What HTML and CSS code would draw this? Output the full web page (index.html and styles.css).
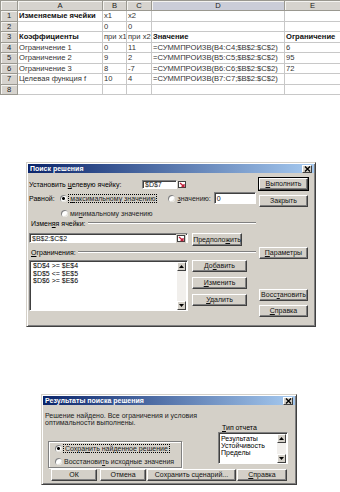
FILE: index.html
```html
<!DOCTYPE html>
<html lang="ru">

<head>
    <meta charset="UTF-8">
    <meta name="viewport" content="width=device-width, initial-scale=1.0">
    <title>Поиск решения</title>
    <link rel="stylesheet" href="styles.css">
</head>

<body>
    <!-- лист с исходными данными -->
    <table class="sheet">
        <colgroup>
            <col class="c-row">
            <col class="c-a">
            <col class="c-b">
            <col class="c-c">
            <col class="c-d">
            <col class="c-e">
        </colgroup>
        <tr class="head">
            <th></th><th>A</th><th>B</th><th>C</th><th class="sel">D</th><th>E</th>
        </tr>
        <tr>
            <th>1</th><td class="b">Изменяемые ячейки</td><td>x1</td><td>x2</td><td></td><td></td>
        </tr>
        <tr>
            <th>2</th><td></td><td>0</td><td>0</td><td></td><td></td>
        </tr>
        <tr>
            <th>3</th><td class="b">Коэффициенты</td><td>при x1</td><td>при x2</td><td class="b">Значение</td><td class="b">Ограничение</td>
        </tr>
        <tr>
            <th>4</th><td>Ограничение 1</td><td>0</td><td>11</td><td>=СУММПРОИЗВ(B4:C4;$B$2:$C$2)</td><td>6</td>
        </tr>
        <tr>
            <th>5</th><td>Ограничение 2</td><td>9</td><td>2</td><td>=СУММПРОИЗВ(B5:C5;$B$2:$C$2)</td><td>95</td>
        </tr>
        <tr>
            <th>6</th><td>Ограничение 3</td><td>8</td><td>-7</td><td>=СУММПРОИЗВ(B6:C6;$B$2:$C$2)</td><td>72</td>
        </tr>
        <tr>
            <th>7</th><td>Целевая функция f</td><td>10</td><td>4</td><td>=СУММПРОИЗВ(B7:C7;$B$2:$C$2)</td><td></td>
        </tr>
        <tr>
            <th>8</th><td></td><td></td><td></td><td></td><td></td>
        </tr>
    </table>

    <!-- окно "Поиск решения" -->
    <div class="dlg solver">
        <div class="caption">
            <span>Поиск решения</span>
            <span class="close-btn">
                <svg width="7" height="6" viewBox="0 0 7 6"><path d="M1 0.5L6 5.5M6 0.5L1 5.5" stroke="#000" stroke-width="1.4"/></svg>
            </span>
        </div>
        <div class="solver-body">
            <div class="solver-main">
                <div class="line target">
                    <span class="lbl target-lbl">Установить <u>ц</u>елевую ячейку:</span>
                    <span class="edit target-edit">$D$7</span>
                    <span class="ref">
                        <svg width="10" height="9" viewBox="0 0 10 9"><rect x="1.5" y="1.5" width="7" height="6" fill="#fff" stroke="#404040"/><path d="M3 3L7 6.5M7 4v2.5H4.5" fill="none" stroke="#c0203a" stroke-width="1.3"/></svg>
                    </span>
                </div>
                <div class="line equal">
                    <span class="lbl eq-lbl">Равной:</span>
                    <span class="radio on"></span>
                    <span class="rtext focus"><u>м</u>аксимальному значению</span>
                    <span class="radio val-radio"></span>
                    <span class="rtext"><u>з</u>начению:</span>
                    <span class="edit value-edit">0</span>
                </div>
                <div class="line minline">
                    <span class="radio"></span>
                    <span class="rtext">ми<u>н</u>имальному значению</span>
                </div>
                <div class="grp-title"><span>Измен<u>я</u>я ячейки:</span></div>
                <div class="line cells">
                    <span class="edit cells-edit">
                        <span class="edit-text">$B$2:$C$2</span>
                        <span class="ref">
                            <svg width="10" height="9" viewBox="0 0 10 9"><rect x="1.5" y="1.5" width="7" height="6" fill="#fff" stroke="#404040"/><path d="M3 3L7 6.5M7 4v2.5H4.5" fill="none" stroke="#c0203a" stroke-width="1.3"/></svg>
                        </span>
                    </span>
                    <span class="btn guess">Предполо<u>ж</u>ить</span>
                </div>
                <div class="grp-title"><span><u>О</u>граничения:</span></div>
                <div class="line limits">
                    <div class="list limits-list">
                        <div class="items">
                            <div>$D$4 &gt;= $E$4</div>
                            <div>$D$5 &lt;= $E$5</div>
                            <div>$D$6 &gt;= $E$6</div>
                        </div>
                        <div class="vscroll">
                            <span class="sb"><svg width="5" height="3" viewBox="0 0 5 3"><path d="M2.5 0L5 3H0z" fill="#000"/></svg></span>
                            <span class="track"></span>
                            <span class="sb"><svg width="5" height="3" viewBox="0 0 5 3"><path d="M0 0h5L2.5 3z" fill="#000"/></svg></span>
                        </div>
                    </div>
                    <div class="limit-btns">
                        <span class="btn">До<u>б</u>авить</span>
                        <span class="btn"><u>И</u>зменить</span>
                        <span class="btn"><u>У</u>далить</span>
                    </div>
                </div>
            </div>
            <div class="solver-side">
                <span class="btn default"><u>В</u>ыполнить</span>
                <span class="btn close">Закрыть</span>
                <span class="btn params"><u>П</u>араметры</span>
                <span class="btn restore">Восс<u>т</u>ановить</span>
                <span class="btn help"><u>С</u>правка</span>
            </div>
        </div>
    </div>

    <!-- окно "Результаты поиска решения" -->
    <div class="dlg results">
        <div class="caption">
            <span>Результаты поиска решения</span>
            <span class="close-btn">
                <svg width="7" height="6" viewBox="0 0 7 6"><path d="M1 0.5L6 5.5M6 0.5L1 5.5" stroke="#000" stroke-width="1.4"/></svg>
            </span>
        </div>
        <div class="res-body">
            <div class="res-top">
                <div class="res-left">
                    <p class="msg">Решение найдено. Все ограничения и условия<br>оптимальности выполнены.</p>
                    <div class="frame">
                        <div class="line">
                            <span class="radio on"></span>
                            <span class="rtext focus">Сохра<u>н</u>ить найденное решение</span>
                        </div>
                        <div class="line">
                            <span class="radio"></span>
                            <span class="rtext">Восстанови<u>т</u>ь исходные значения</span>
                        </div>
                    </div>
                </div>
                <div class="res-right">
                    <div class="type-lbl"><u>Т</u>ип отчета</div>
                    <div class="list type-list">
                        <div class="items">
                            <div>Результаты</div>
                            <div>Устойчивость</div>
                            <div>Пределы</div>
                        </div>
                        <div class="vscroll">
                            <span class="sb"><svg width="5" height="3" viewBox="0 0 5 3"><path d="M2.5 0L5 3H0z" fill="#000"/></svg></span>
                            <span class="track"></span>
                            <span class="sb"><svg width="5" height="3" viewBox="0 0 5 3"><path d="M0 0h5L2.5 3z" fill="#000"/></svg></span>
                        </div>
                    </div>
                </div>
            </div>
            <div class="res-btns">
                <span class="btn ok">ОК</span>
                <span class="btn cancel">Отмена</span>
                <span class="btn save">Сохранить сценарий...</span>
                <span class="btn help2"><u>С</u>правка</span>
            </div>
        </div>
    </div>
</body>

</html>
```

FILE: styles.css
```css
html,
body {
    margin: 0;
    padding: 0;
    overflow: hidden;
}

body {
    width: 340px;
    height: 492px;
    background-color: #fff;
    font-family: "Liberation Sans", Arial, sans-serif;
    color: #000;
}

u {
    text-decoration: underline;
    text-underline-offset: 1px;
}

/* лист Excel */
.sheet {
    border-collapse: collapse;
    table-layout: fixed;
    width: 340px;
    font-size: 7.6px;
}

.c-row { width: 17px; }
.c-a { width: 85px; }
.c-b { width: 24px; }
.c-c { width: 25px; }
.c-d { width: 133px; }
.c-e { width: 56px; }

.sheet tr {
    height: 10.5px;
}

.sheet tr.head {
    height: 10px;
}

.sheet th,
.sheet td {
    padding: 0 0 0 1px;
    border: 1px solid #c8c8c8;
    line-height: 9px;
    white-space: nowrap;
    overflow: hidden;
    text-align: left;
    font-weight: normal;
    color: #333;
}

.sheet th {
    background-color: #d6d3ce;
    border-color: #9a9890;
    text-align: center;
    padding: 0;
    color: #222;
    box-shadow: inset 1px 1px 0 #f4f3f0;
}

.sheet th.sel {
    background-color: #cbcdd8;
}

.sheet td.b {
    font-weight: bold;
    color: #111;
}

/* общие элементы окон */
.dlg {
    box-sizing: border-box;
    background-color: #d4d0c8;
    border: 1px solid;
    border-color: #d4d0c8 #404040 #404040 #d4d0c8;
    box-shadow: inset 1px 1px 0 #fff, inset -1px -1px 0 #808080;
    padding: 1px;
    font-size: 7px;
}

.caption {
    display: flex;
    align-items: center;
    justify-content: space-between;
    height: 9px;
    padding: 0 2px;
    background: linear-gradient(to right, #0a246a, #a6caf0);
    color: #fff;
    font-weight: bold;
    font-size: 7px;
}

.close-btn {
    box-sizing: border-box;
    display: flex;
    align-items: center;
    justify-content: center;
    width: 10px;
    height: 8px;
    background-color: #d4d0c8;
    border: 1px solid;
    border-color: #fff #404040 #404040 #fff;
}

.line {
    display: flex;
    align-items: center;
}

.btn {
    box-sizing: border-box;
    display: block;
    height: 12px;
    background-color: #d4d0c8;
    border: 1px solid;
    border-color: #fff #404040 #404040 #fff;
    box-shadow: inset -1px -1px 0 #808080;
    font-size: 7px;
    line-height: 10px;
    text-align: center;
    white-space: nowrap;
    color: #111;
}

.btn.default {
    outline: 1px solid #000;
}

.edit {
    box-sizing: border-box;
    display: flex;
    align-items: center;
    background-color: #fff;
    border: 1px solid;
    border-color: #808080 #fff #fff #808080;
    box-shadow: inset 1px 1px 0 #404040;
    padding-left: 2px;
    font-size: 7px;
    color: #111;
}

.ref {
    box-sizing: border-box;
    display: flex;
    width: 10px;
    height: 9px;
    background-color: #d4d0c8;
}

.radio {
    flex: none;
    width: 7px;
    height: 7px;
    border-radius: 50%;
    background-color: #fff;
    box-shadow: inset 1px 1px 0 #808080, inset -1px -1px 0 #e4e2dc;
}

.radio.on {
    background: radial-gradient(circle, #000 0 1.2px, #fff 1.7px);
}

.rtext {
    margin-left: 2px;
    white-space: nowrap;
    color: #222;
}

.focus {
    outline: 1px dotted #000;
    outline-offset: 0;
    padding: 0 1px;
}

.list {
    box-sizing: border-box;
    display: flex;
    background-color: #fff;
    border: 1px solid;
    border-color: #808080 #fff #fff #808080;
    box-shadow: inset 1px 1px 0 #404040;
}

.list .items {
    flex: 1;
    padding: 1px 0 0 3px;
    line-height: 7.5px;
    white-space: nowrap;
}

.vscroll {
    display: flex;
    flex-direction: column;
    width: 9px;
    margin: 1px 1px 0 0;
}

.vscroll .sb {
    box-sizing: border-box;
    display: flex;
    align-items: center;
    justify-content: center;
    height: 9px;
    background-color: #d4d0c8;
    border: 1px solid;
    border-color: #fff #404040 #404040 #fff;
}

.vscroll .track {
    flex: 1;
    background-color: #f1efec;
}

/* окно "Поиск решения" */
.solver {
    width: 290px;
    height: 165px;
    margin: 67px 0 0 26px;
}

.solver-body {
    display: flex;
    gap: 3px;
    padding: 0 5px 0 1px;
}

.solver-main {
    width: 227px;
    padding-top: 7px;
}

.target {
    height: 9px;
}

.target-lbl {
    width: 113px;
    white-space: nowrap;
}

.target-edit {
    width: 35px;
    height: 9px;
}

.equal {
    height: 12px;
    margin-top: 3px;
}

.eq-lbl {
    width: 32px;
}

.val-radio {
    margin-left: 12px;
}

.value-edit {
    width: 43px;
    height: 12px;
    margin-left: 3px;
}

.minline {
    height: 8px;
    margin-top: 5px;
    padding-left: 32px;
}

.grp-title {
    display: flex;
    align-items: center;
    height: 8px;
    margin-top: 2px;
    padding-left: 2px;
    white-space: nowrap;
}

.grp-title::after {
    content: "";
    flex: 1;
    margin-left: 2px;
    border-top: 1px solid #808080;
    border-bottom: 1px solid #fff;
}

.cells {
    align-items: flex-start;
    margin-top: 6px;
}

.cells-edit {
    width: 159px;
    height: 10px;
    justify-content: space-between;
}

.cells-edit .ref {
    margin-right: 1px;
}

.guess {
    width: 50px;
    height: 13px;
    line-height: 11px;
    margin-left: 4px;
}

.limits {
    align-items: flex-start;
    margin-top: 4px;
}

.limits-list {
    width: 159px;
    height: 51px;
}

.limit-btns {
    display: flex;
    flex-direction: column;
    gap: 5px;
    width: 55px;
    margin-left: 4px;
}

.limit-btns .btn {
    height: 12px;
}

.solver-side {
    display: flex;
    flex-direction: column;
    width: 49px;
    padding-top: 5px;
}

.solver-side .close {
    margin-top: 5px;
}

.solver-side .params {
    margin-top: 40px;
}

.solver-side .restore {
    margin-top: 30px;
}

.solver-side .help {
    margin-top: 4px;
}

/* окно "Результаты поиска решения" */
.results {
    width: 256px;
    height: 91px;
    margin: 67px 0 0 41px;
}

.res-body {
    padding: 7px 0 0 2px;
}

.res-top {
    display: flex;
}

.res-left {
    width: 173px;
}

.msg {
    margin: 0;
    line-height: 7px;
    color: #222;
}

.frame {
    box-sizing: border-box;
    display: flex;
    flex-direction: column;
    gap: 5px;
    width: 134px;
    height: 27px;
    margin: 15px 0 0 3px;
    padding: 2px 0 0 6px;
    border: 1px solid #808080;
    box-shadow: inset 1px 1px 0 #fff, 1px 1px 0 #fff;
}

.frame .line {
    height: 8px;
}

.res-right {
    width: 70px;
    padding-top: 12px;
}

.type-lbl {
    height: 7px;
    line-height: 7px;
    padding-left: 4px;
    margin-bottom: 1px;
}

.type-list {
    height: 32px;
}

.type-list .items {
    padding: 2px 0 0 2px;
    line-height: 7px;
}

.res-btns {
    display: flex;
    margin: 1px 0 0 6px;
}

.res-btns .ok {
    width: 46px;
}

.res-btns .cancel {
    width: 46px;
    margin-left: 3px;
}

.res-btns .save {
    width: 89px;
    margin-left: 1px;
}

.res-btns .help2 {
    width: 50px;
    margin-left: 1px;
}
```
